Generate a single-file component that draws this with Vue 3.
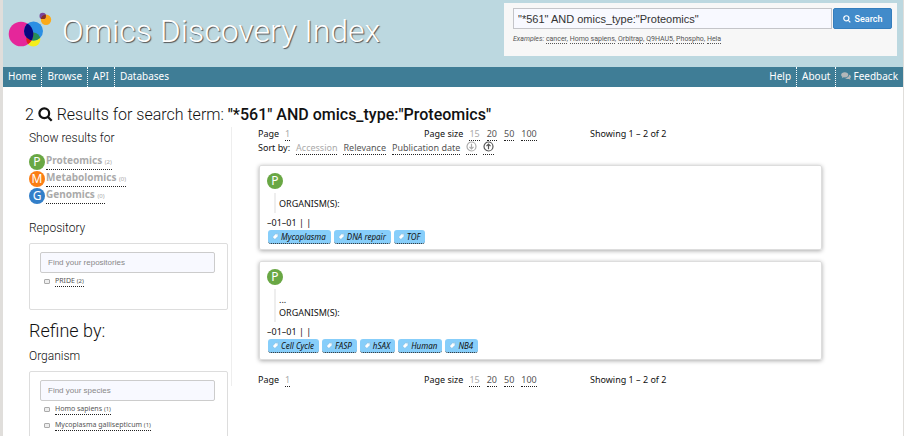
<script setup>
import { ref } from 'vue'

const query = ref('"*561" AND omics_type:"Proteomics"')
const examples = ['cancer', 'Homo sapiens', 'Orbitrap', 'Q9HAU5', 'Phospho', 'Hela']
const omics = [
  { letter: 'P', name: 'Proteomics', count: 2, tone: 'green' },
  { letter: 'M', name: 'Metabolomics', count: 0, tone: 'orange' },
  { letter: 'G', name: 'Genomics', count: 0, tone: 'blue' }
]
const facets = [
  { id: 'repository', title: 'Repository', hint: 'Find your repositories', items: [{ name: 'PRIDE', count: 2 }] },
  {
    id: 'organism',
    title: 'Organism',
    lead: 'Refine by:',
    hint: 'Find your species',
    items: [{ name: 'Homo sapiens', count: 1 }, { name: 'Mycoplasma gallisepticum', count: 1 }]
  }
]
const sizes = [15, 20, 50, 100]
const results = [
  { text: '', tags: ['Mycoplasma', 'DNA repair', 'TOF'] },
  { text: '...', tags: ['Cell Cycle', 'FASP', 'hSAX', 'Human', 'NB4'] }
]
</script>

<template>
  <div class="page">
    <header class="top">
      <a class="brand" href="#">
        <svg class="logo" viewBox="0 0 46 38" aria-hidden="true">
          <defs>
            <clipPath id="pink-clip"><circle cx="13" cy="22" r="12.3" /></clipPath>
            <clipPath id="blue-clip"><circle cx="25.5" cy="19" r="9.5" /></clipPath>
            <clipPath id="amber-clip"><circle cx="38" cy="7.8" r="5.2" /></clipPath>
          </defs>
          <circle cx="25.3" cy="27.5" r="7" fill="#f5ee1b" />
          <circle cx="13" cy="22" r="12.3" fill="#e5269a" />
          <circle cx="25.5" cy="19" r="9.5" fill="#2b8fe4" />
          <circle cx="25.3" cy="27.5" r="7" fill="#278d56" clip-path="url(#blue-clip)" />
          <circle cx="25.3" cy="27.5" r="7" fill="#df211c" clip-path="url(#pink-clip)" />
          <circle cx="25.5" cy="19" r="9.5" fill="#07087f" clip-path="url(#pink-clip)" />
          <circle cx="38" cy="7.8" r="5.2" fill="#fbaa19" />
          <circle cx="34.7" cy="3.9" r="3.2" fill="#7c459b" />
          <circle cx="34.7" cy="3.9" r="3.2" fill="#87301f" clip-path="url(#amber-clip)" />
        </svg>
        <h1>Omics Discovery Index</h1>
      </a>
      <form class="search" @submit.prevent>
        <div class="search-row">
          <input v-model="query" type="text" aria-label="Search term" />
          <button type="submit">
            <svg class="lens" viewBox="0 0 16 16" aria-hidden="true">
              <circle cx="6.7" cy="6.7" r="5.2" /><path d="M10.6 10.6l4 4" />
            </svg>
            Search
          </button>
        </div>
        <p class="examples">
          <em>Examples:</em>
          <template v-for="(e, i) in examples" :key="e">{{ ' ' }}<a href="#">{{ e }}</a><template v-if="i < examples.length - 1">,</template></template>
        </p>
      </form>
    </header>

    <nav class="menu">
      <a href="#">Home</a><a href="#">Browse</a><a href="#">API</a><a href="#">Databases</a>
      <span class="spacer"></span>
      <a href="#">Help</a><a href="#">About</a>
      <a href="#">
        <svg class="chat" viewBox="0 0 20 16" aria-hidden="true">
          <path d="M16.5 5.5c2 .8 3.3 2.300 3.300 4 0 1.300-.7 2.400-1.800 3.200l1.300 2.700-3.600-1.500c-2.700.5-5.700-.2-7.200-1.900 4.500 0 8-2.600 8-6.500z" />
          <path d="M7.500.7C3.500.7.3 3 .3 5.800c0 1.600 1 3 2.600 4L1.600 12.500l3.900-1.800c4.800.8 9.200-1.500 9.200-4.900C14.700 3 11.500.7 7.500.7z" />
        </svg>Feedback</a>
    </nav>

    <main class="content">
      <h2 class="summary">
        2
        <svg class="lens" viewBox="0 0 16 16" aria-hidden="true">
          <circle cx="6.7" cy="6.7" r="5.2" /><path d="M10.6 10.6l4 4" />
        </svg>
        Results for search term: <strong>"*561" AND omics_type:"Proteomics"</strong>
      </h2>
      <div class="columns">
        <aside class="side">
          <h4>Show results for</h4>
          <ul class="omics">
            <li v-for="o in omics" :key="o.name">
              <span class="badge" :class="o.tone">{{ o.letter }}</span>
              <a href="#">{{ o.name }} <small>({{ o.count }})</small></a>
            </li>
          </ul>
          <section v-for="f in facets" :key="f.id" class="facet">
            <h3 v-if="f.lead">{{ f.lead }}</h3>
            <h4>{{ f.title }}</h4>
            <div class="box">
              <input class="find" type="text" :placeholder="f.hint" :aria-label="f.hint" />
              <div v-for="(item, i) in f.items" :key="item.name" class="choice">
                <input :id="f.id + i" type="checkbox" />
                <label :for="f.id + i">{{ item.name }} <small>({{ item.count }})</small></label>
              </div>
            </div>
          </section>
        </aside>

        <div class="main">
          <div class="pager">
            <div>Page <a class="off" href="#">1</a></div>
            <div>Page size <a v-for="s in sizes" :key="s" href="#" :class="{ off: s === 15 }">{{ s }}</a></div>
            <div>Showing 1 – 2 of 2</div>
          </div>
          <div class="sort">
            Sort by: <a class="off" href="#">Accession</a><a href="#">Relevance</a><a href="#">Publication date</a>
            <a class="arrow off" href="#" aria-label="Descending">
              <svg viewBox="0 0 12 12" aria-hidden="true"><circle cx="6" cy="6" r="4.900" /><path d="M6 3v5.500M3.800 6.400L6 8.600l2.200-2.200" /></svg>
            </a>
            <a class="arrow" href="#" aria-label="Ascending">
              <svg viewBox="0 0 12 12" aria-hidden="true"><circle cx="6" cy="6" r="4.900" /><path d="M6 9V3.500M3.800 5.600L6 3.400l2.200 2.200" /></svg>
            </a>
          </div>
          <article v-for="(r, i) in results" :key="i" class="card">
            <span class="badge green">P</span>
            <blockquote>
              <p v-if="r.text">{{ r.text }}</p>
              <p>ORGANISM(S):</p>
            </blockquote>
            <p class="date">–01–01 | |</p>
            <div class="tags">
              <a v-for="t in r.tags" :key="t" href="#">
                <svg viewBox="0 0 8 8" aria-hidden="true"><path d="M4.200.8L7.200.6 7 3.600 3.300 7.400.6 4.700z" fill="#fff" stroke="#62aadb" stroke-width=".5" /><circle cx="5.800" cy="2" r=".6" fill="#62aadb" /></svg>{{ t }}</a>
            </div>
          </article>
          <div class="pager last">
            <div>Page <a class="off" href="#">1</a></div>
            <div>Page size <a v-for="s in sizes" :key="s" href="#" :class="{ off: s === 15 }">{{ s }}</a></div>
            <div>Showing 1 – 2 of 2</div>
          </div>
        </div>
      </div>
    </main>
  </div>
</template>

<style>
body {
  background: #e0dedb;
  overflow: hidden;
}
</style>

<style scoped>
* {
  box-sizing: border-box;
}
h1, h2, h3, h4, p, ul, blockquote {
  margin: 0;
  padding: 0;
  font-weight: 400;
}
a {
  color: inherit;
  text-decoration: none;
}
.page {
  margin: 0 1px 0 3px;
  min-height: 100vh;
  background: #fff;
  color: #111;
  font: 9px/12px "Noto Sans", sans-serif;
}
.top {
  display: flex;
  justify-content: space-between;
  align-items: flex-start;
  height: 67px;
  padding: 3px 6px 0 5px;
  background: #bcd8e0;
}
.brand {
  display: flex;
  gap: 8px;
  padding-top: 9px;
}
.logo {
  width: 46px;
  height: 38px;
}
h1 {
  color: #fff;
  font: 300 32px/38px Roboto, "Liberation Sans", sans-serif;
  text-shadow: 1px 1px 1px #555;
  white-space: nowrap;
}
.search {
  width: 393px;
  height: 53px;
  padding: 5px 5px 0 9px;
  background: #f7f7f7;
  font-family: Roboto, "Liberation Sans", sans-serif;
}
.search-row {
  display: flex;
  gap: 1px;
}
.search-row input {
  flex: 1;
  min-width: 0;
  height: 21px;
  padding: 0 4px;
  border: 1px solid #c4c5c9;
  background: #f8f9ff;
  color: #333;
  font: 11px "Liberation Sans", sans-serif;
}
.search-row button {
  display: flex;
  align-items: center;
  justify-content: center;
  gap: 4px;
  width: 59px;
  height: 21px;
  padding: 0;
  border: 1px solid #357ebd;
  border-radius: 2px;
  background: #428bca;
  color: #fff;
  font: 500 9px Roboto, "Liberation Sans", sans-serif;
}
.lens {
  fill: none;
  stroke: currentColor;
  stroke-width: 2.4;
}
button .lens {
  width: 8px;
  height: 8px;
}
.examples {
  margin-top: 5px;
  color: #555;
  font-size: 7px;
  line-height: 11px;
}
.examples a {
  border-bottom: 1px dotted #555;
}
.menu {
  display: flex;
  height: 20px;
  background: #3f7d96;
  color: #fff;
  font-size: 10px;
  line-height: 19px;
}
.menu a {
  padding: 0 5px;
}
.menu a + a {
  border-left: 1px dotted #fff;
}
.spacer {
  flex: 1;
}
.chat {
  width: 10px;
  height: 8px;
  margin-right: 2px;
  fill: #b3b7b9;
}
.summary {
  padding: 17px 22px 0;
  font: 300 16px/22px Roboto, "Liberation Sans", sans-serif;
}
.summary .lens {
  width: 15px;
  height: 15px;
  vertical-align: -2px;
}
.summary strong {
  font-weight: 500;
}
.columns {
  display: flex;
  align-items: flex-start;
  gap: 26px;
  padding: 1px 81px 0 26px;
}
.side {
  flex: 0 0 203px;
  height: 259px;
  padding-right: 3px;
  border-right: 1px solid #eee;
}
h3 {
  margin-bottom: 5px;
  font: 300 18px/24px Roboto, "Liberation Sans", sans-serif;
}
h4 {
  font: 300 12px/16px Roboto, "Liberation Sans", sans-serif;
}
.side > h4 {
  padding-top: 3px;
}
.omics {
  margin: 7px 0 16px;
  list-style: none;
}
.omics li {
  display: flex;
  align-items: center;
  gap: 1px;
  height: 17px;
}
.omics a {
  border-bottom: 1px dotted #222;
  color: #aaa;
  font-size: 10px;
  font-weight: 700;
  line-height: 13px;
}
small {
  font-size: 6px;
  font-weight: 400;
}
.badge {
  display: flex;
  align-items: center;
  justify-content: center;
  width: 16px;
  height: 16px;
  border-radius: 50%;
  color: #fff;
  font-size: 12px;
  line-height: 16px;
}
.green {
  background: #69a744;
}
.orange {
  background: #fb7e14;
}
.blue {
  background: #327fc9;
}
.box {
  min-height: 66px;
  margin: 7px 0 9px;
  padding: 8px 12px 24px 10px;
  border: 1px solid #ddd;
  border-radius: 2px;
}
.box:has(.choice:only-of-type) {
  padding-bottom: 20px;
}
.find {
  width: 100%;
  height: 21px;
  padding: 0 7px;
  border: 1px solid #ccc;
  border-radius: 2px;
  background: #f8f9ff;
  font: 8px "Liberation Sans", sans-serif;
}
.find::placeholder {
  color: #888;
}
.choice {
  display: flex;
  align-items: center;
  gap: 5px;
  height: 16px;
  padding-left: 4px;
}
.choice input {
  appearance: none;
  width: 6px;
  height: 5px;
  margin: 0;
  border: 1px solid #aaa;
  border-radius: 1px;
  background: #eee;
}
.choice label {
  border-bottom: 1px dotted #222;
  color: #555;
  font-size: 7px;
  line-height: 9px;
}
.main {
  flex: 1;
  min-width: 0;
}
.pager {
  display: grid;
  grid-template-columns: 166px 166px auto;
  line-height: 12px;
  padding-top: 1px;
}
.pager > div {
  display: flex;
}
.pager a,
.sort a {
  margin-left: 6px;
  border-bottom: 1px dotted #222;
  color: #555;
}
.pager a + a {
  margin-left: 7px;
}
.pager .off,
.sort .off {
  color: #aaa;
}
.last {
  padding-top: 3px;
}
.sort {
  display: flex;
  align-items: center;
  height: 14px;
  line-height: 12px;
}
.sort .arrow {
  width: 11px;
  height: 14px;
}
.arrow svg {
  display: block;
  width: 11px;
  height: 11px;
  fill: none;
  stroke: currentColor;
  stroke-width: 1.3;
}
.card {
  height: 85px;
  margin: 10px 0 11px 1px;
  padding: 7px;
  border: 1px solid #ddd;
  border-radius: 2px;
  box-shadow: 0 1px 4px #aaa;
}
.card + .card {
  height: 99px;
}
.card blockquote {
  margin: 4px 0 3px 7px;
  padding: 4px 0 3px 3px;
  border-left: 2px solid #eee;
  line-height: 13px;
}
.date {
  line-height: 14px;
}
.tags {
  display: flex;
  gap: 3px;
  padding-left: 1px;
}
.tags a {
  display: flex;
  align-items: center;
  gap: 2px;
  height: 14px;
  padding: 0 5px 0 4px;
  border-bottom: 1px dotted #222;
  border-radius: 3px;
  background: #87cefa;
  font-size: 8px;
  font-style: italic;
}
.tags svg {
  width: 7px;
  height: 7px;
}
</style>
